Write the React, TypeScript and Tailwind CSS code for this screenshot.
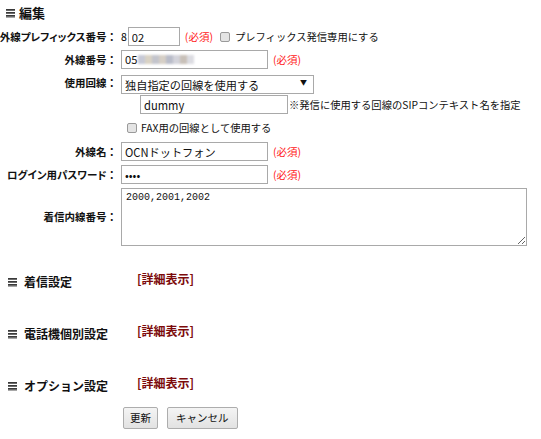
import { useState } from "react";

const jp = "[font-family:'Noto_Sans_CJK_JP','Liberation_Sans',sans-serif]";

function BarsIcon() {
  return (
    <svg width="9" height="9" viewBox="0 0 9 9" className="shrink-0">
      <rect x="0" y="0" width="9" height="1" fill="#3a3a3a" />
      <rect x="0" y="1" width="9" height="1" fill="#6a6a6a" />
      <rect x="0" y="3" width="9" height="1" fill="#3a3a3a" />
      <rect x="0" y="4" width="9" height="1" fill="#6a6a6a" />
      <rect x="0" y="6" width="9" height="1" fill="#3a3a3a" />
      <rect x="0" y="7" width="9" height="1" fill="#6a6a6a" />
      <rect x="0" y="8" width="9" height="1" fill="#a8a8a8" />
    </svg>
  );
}

function Box() {
  return (
    <span className="inline-block w-[10px] h-[10px] rounded-[2px] border border-[#9a9a9a] bg-[#e4e4e4] shrink-0" />
  );
}

function Req() {
  return <span className="text-[#ff2020] text-[10.5px] ml-[5px] whitespace-nowrap">(必須)</span>;
}

function Label({ children }: { children: React.ReactNode }) {
  return (
    <div className="w-[119px] shrink-0 flex justify-end pr-[2px] text-[10.5px] font-bold text-[#111] whitespace-nowrap">
      <span className="[font-feature-settings:'palt']">{children}</span>
      <span>：</span>
    </div>
  );
}

const inputCls =
  "h-[19px] border border-[#a9a9a9] bg-white px-[3px] text-[11.2px] text-[#111] outline-none";

function Section({ title }: { title: string }) {
  return (
    <div className="flex items-start h-[20px]">
      <div className="w-[137px] shrink-0 flex items-center gap-[7px] pl-[8px] pt-[3px]">
        <BarsIcon />
        <span className="text-[12px] font-bold text-[#111]">{title}</span>
      </div>
      <a className="text-[12px] font-bold text-[#7c0a0a] cursor-pointer">[詳細表示]</a>
    </div>
  );
}

export default function App() {
  const [prefix, setPrefix] = useState("02");
  const [line, setLine] = useState("独自指定の回線を使用する");

  return (
    <div className={`w-[541px] h-[439px] bg-white overflow-hidden ${jp}`}>
      {/* 編集 */}
      <div className="h-[26px] flex items-center gap-[4px] pl-[6px]">
        <BarsIcon />
        <span className="text-[13px] font-bold text-[#111]">編集</span>
      </div>

      <div className="flex items-center h-[19px] mt-[1px]">
        <Label>外線プレフィックス番号</Label>
        <span className="text-[10.5px] ml-[2px] mr-[1px]">8</span>
        <input
          className={`${inputCls} w-[52px]`}
          value={prefix}
          onChange={(e) => setPrefix(e.target.value)}
        />
        <Req />
        <span className="ml-[7px] mr-[5px] flex">
          <Box />
        </span>
        <span className="text-[10.3px] text-[#111] whitespace-nowrap">プレフィックス発信専用にする</span>
      </div>

      <div className="flex items-center h-[19px] mt-[4px]">
        <Label>外線番号</Label>
        <div className={`${inputCls} w-[147px] ml-[2px] flex items-center`}>
          <span>05</span>
          <span className="flex ml-[1px] blur-[1px]">
            <span className="w-[7px] h-[9px] bg-[#c7c9d6]" />
            <span className="w-[7px] h-[9px] bg-[#d9d2c4]" />
            <span className="w-[7px] h-[9px] bg-[#c3c4cc]" />
            <span className="w-[7px] h-[9px] bg-[#d6cfc6]" />
            <span className="w-[7px] h-[9px] bg-[#b9bcc9]" />
            <span className="w-[7px] h-[9px] bg-[#d3d3da]" />
            <span className="w-[7px] h-[9px] bg-[#c8c0b8]" />
            <span className="w-[7px] h-[9px] bg-[#dcdce2]" />
          </span>
        </div>
        <Req />
      </div>

      <div className="flex items-center h-[19px] mt-[4px]">
        <Label>使用回線</Label>
        <div className="relative ml-[2px]">
          <select
            className={`${inputCls} w-[193px] appearance-none pr-[16px]`}
            value={line}
            onChange={(e) => setLine(e.target.value)}
          >
            <option>独自指定の回線を使用する</option>
          </select>
          <span className="absolute inset-y-0 right-[7px] flex items-center text-[7px] text-[#111] pointer-events-none">▼</span>
        </div>
      </div>

      <div className="flex items-center h-[19px] mt-[3px] pl-[140px]">
        <input className={`${inputCls} w-[148px]`} defaultValue="dummy" />
        <span className="text-[10.3px] text-[#111] ml-[1px] whitespace-nowrap">
          ※発信に使用する回線のSIPコンテキスト名を指定
        </span>
      </div>

      <div className="flex items-center h-[19px] mt-[4px] pl-[127px]">
        <Box />
        <span className="text-[10.3px] text-[#111] ml-[4px]">FAX用の回線として使用する</span>
      </div>

      <div className="flex items-center h-[19px] mt-[5px]">
        <Label>外線名</Label>
        <input className={`${inputCls} w-[147px] ml-[2px]`} defaultValue="OCNドットフォン" />
        <Req />
      </div>

      <div className="flex items-center h-[19px] mt-[4px]">
        <Label>ログイン用パスワード</Label>
        <input type="password" className={`${inputCls} w-[147px] ml-[2px] text-[8px]`} defaultValue="abcd" />
        <Req />
      </div>

      <div className="flex items-center mt-[4px]">
        <Label>着信内線番号</Label>
        <textarea
          className="ml-[2px] w-[406px] h-[58px] border border-[#a9a9a9] bg-white px-[4px] py-[2px] text-[10px] leading-[13px] text-[#111] outline-none [font-family:'Liberation_Mono',monospace]"
          defaultValue="2000,2001,2002"
        />
      </div>

      <div className="mt-[24px] flex flex-col gap-[32px]">
        <Section title="着信設定" />
        <Section title="電話機個別設定" />
        <Section title="オプション設定" />
      </div>

      <div className="flex gap-[9px] pl-[123px] mt-[13px]">
        <button className="h-[22px] px-[6px] border border-[#adadad] rounded-[2px] bg-gradient-to-b from-[#f4f4f4] to-[#e2e2e2] text-[10.5px] text-[#111]">
          更新
        </button>
        <button className="h-[22px] px-[8px] border border-[#adadad] rounded-[2px] bg-gradient-to-b from-[#f4f4f4] to-[#e2e2e2] text-[10.5px] text-[#111]">
          キャンセル
        </button>
      </div>
    </div>
  );
}
